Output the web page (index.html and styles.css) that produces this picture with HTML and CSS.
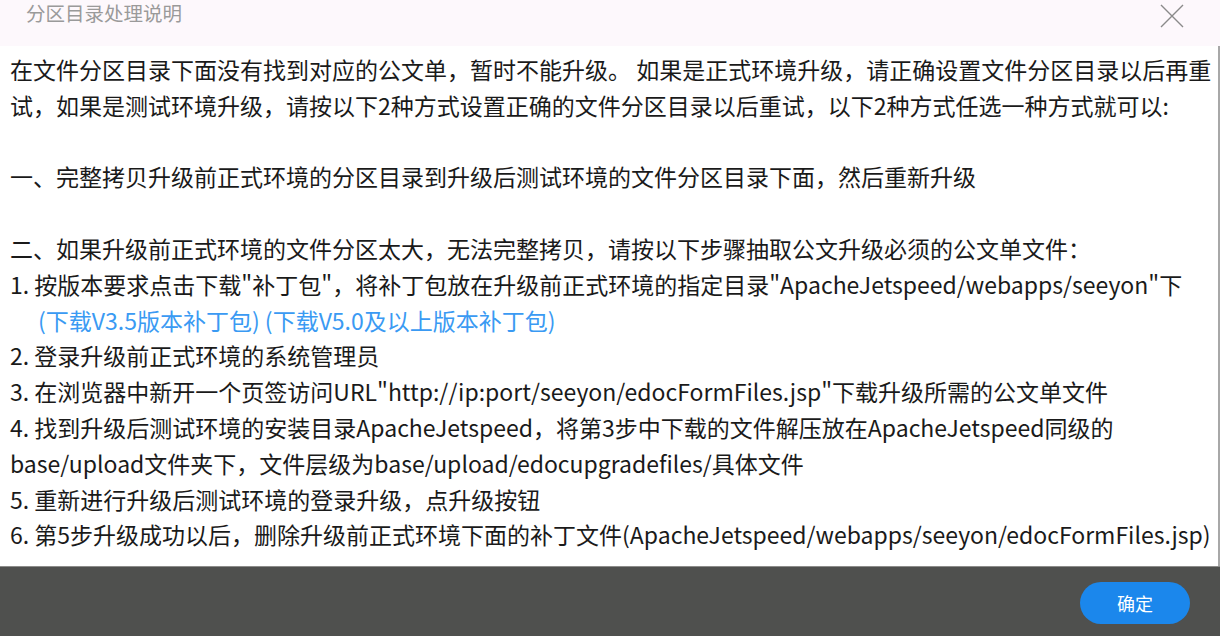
FILE: index.html
```html
<!DOCTYPE html>
<html lang="zh-CN">
<head>
    <meta charset="UTF-8">
    <title>分区目录处理说明</title>
    <link rel="stylesheet" href="styles.css">
</head>
<body>

    <div class="dialog">
        <!-- Header -->
        <div class="dialog-header">
            <span class="dialog-title">分区目录处理说明</span>
            <span class="dialog-close">
                <svg width="24" height="24" viewBox="0 0 24 24">
                    <path d="M1 1 L23 23 M23 1 L1 23" stroke="#8a8a8a" stroke-width="1.4" fill="none"/>
                </svg>
            </span>
        </div>

        <!-- Content -->
        <div class="dialog-body">
            <p>在文件分区目录下面没有找到对应的公文单，暂时不能升级。 如果是正式环境升级，请正确设置文件分区目录以后再重试，如果是测试环境升级，请按以下2种方式设置正确的文件分区目录以后重试，以下2种方式任选一种方式就可以:</p>
            <p class="gap">一、完整拷贝升级前正式环境的分区目录到升级后测试环境的文件分区目录下面，然后重新升级</p>
            <p class="gap">二、如果升级前正式环境的文件分区太大，无法完整拷贝，请按以下步骤抽取公文升级必须的公文单文件：</p>
            <p>1. 按版本要求点击下载"补丁包"，将补丁包放在升级前正式环境的指定目录"ApacheJetspeed/webapps/seeyon"下</p>
            <p class="links"><a href="#">(下载V3.5版本补丁包)</a> <a href="#">(下载V5.0及以上版本补丁包)</a></p>
            <p>2. 登录升级前正式环境的系统管理员</p>
            <p>3. 在浏览器中新开一个页签访问URL"http://ip:port/seeyon/edocFormFiles.jsp"下载升级所需的公文单文件</p>
            <p>4. 找到升级后测试环境的安装目录ApacheJetspeed，将第3步中下载的文件解压放在ApacheJetspeed同级的 base/upload文件夹下，文件层级为base/upload/edocupgradefiles/具体文件</p>
            <p>5. 重新进行升级后测试环境的登录升级，点升级按钮</p>
            <p class="nowrap">6. 第5步升级成功以后，删除升级前正式环境下面的补丁文件(ApacheJetspeed/webapps/seeyon/edocFormFiles.jsp)</p>
        </div>

        <!-- Footer -->
        <div class="dialog-footer">
            <button class="ok-button">确定</button>
        </div>
    </div>

</body>
</html>
```

FILE: styles.css
```css
body {
    margin: 0;
    font-family: "Noto Sans CJK SC", sans-serif;
    background-color: #4f504e;
    overflow: hidden;
}

.dialog {
    width: 1220px;
    height: 636px;
    display: flex;
    flex-direction: column;
}

/* Header */
.dialog-header {
    height: 46px;
    flex-shrink: 0;
    background-color: #fdf8fc;
    display: flex;
    justify-content: space-between;
    align-items: flex-start;
    padding: 0 36px 0 26px;
}

.dialog-title {
    font-size: 19.5px;
    color: #9a9a9a;
    line-height: 26px;
}

.dialog-close {
    margin-top: 4px;
    cursor: pointer;
}

/* Content */
.dialog-body {
    flex: 1;
    min-height: 0;
    background-color: #fff;
    padding: 6px 0 0 10px;
    border-right: 2px solid #a8a8a8;
    font-size: 23px;
    line-height: 35.8px;
    color: #1a1a1a;
}

.dialog-body p {
    margin: 0;
}

.dialog-body .gap {
    margin-top: 35.8px;
}

.dialog-body .links {
    padding-left: 28px;
}

.dialog-body .nowrap {
    white-space: nowrap;
}

.dialog-body a {
    color: #3a9af3;
    text-decoration: none;
}

/* Footer */
.dialog-footer {
    height: 69px;
    flex-shrink: 0;
    border-top: 1px solid #8c8c8a;
    display: flex;
    justify-content: flex-end;
    align-items: flex-start;
    padding-right: 30px;
}

.ok-button {
    margin-top: 15px;
    width: 110px;
    height: 42px;
    border: none;
    border-radius: 21px;
    background-color: #1b87ec;
    color: #fff;
    font-family: "Noto Sans CJK SC", sans-serif;
    font-size: 18px;
    cursor: pointer;
}
```
